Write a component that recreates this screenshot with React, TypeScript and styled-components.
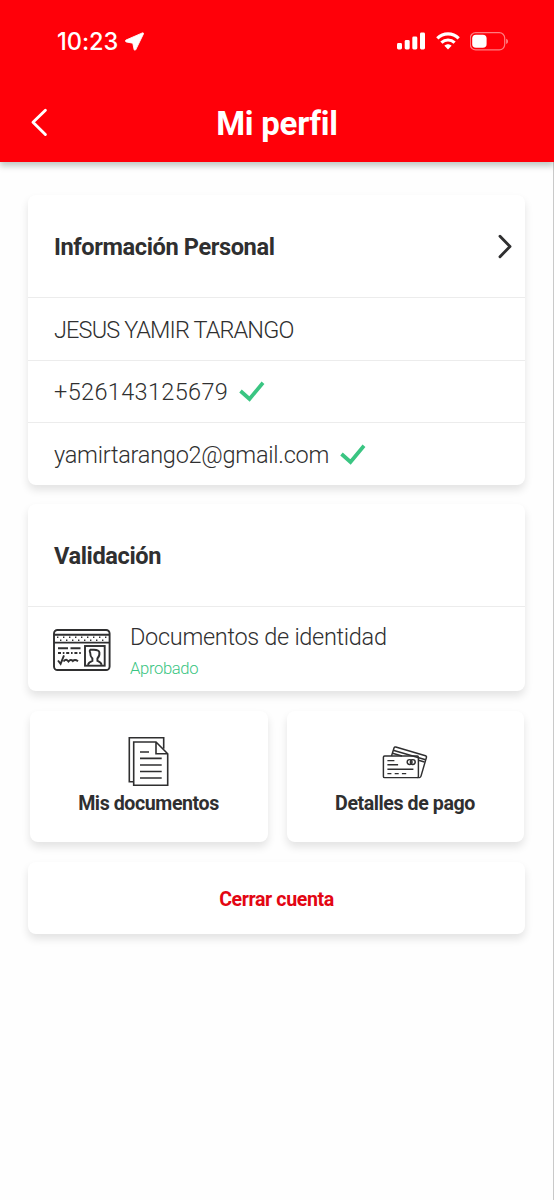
import React from 'react';
import styled, { createGlobalStyle } from 'styled-components';

const ink = '#2f2f30';
const green = '#3ac582';

const GlobalStyle = createGlobalStyle`
  * { box-sizing: border-box; }
  body { margin: 0; background: #fefefe; font-family: Roboto, "Noto Sans", sans-serif; color: ${ink}; }
  svg { display: block; flex: none; }
`;

const Screen = styled.div`
  width: 554px;
  height: 1200px;
  display: flex;
  flex-direction: column;
  overflow: hidden;
`;

const Header = styled.header`
  height: 162px;
  flex: none;
  background: #ff0009;
  color: #fff;
  box-shadow: 0 4px 6px rgba(10, 50, 30, 0.26);
  z-index: 1;
`;

const StatusBar = styled.div`
  height: 82px;
  padding: 0 44px 0 57px;
  display: flex;
  align-items: center;
`;

const Clock = styled.span`
  font: 500 23.6px/30px Inter, sans-serif;
  letter-spacing: -0.05px;
  width: 68px;
  margin-top: 2px;
  white-space: nowrap;
`;

const StatusIcons = styled.div`
  margin-left: auto;
  display: flex;
  align-items: center;
  gap: 10px;
`;

const TitleBar = styled.div`
  height: 80px;
  padding-left: 30px;
  display: grid;
  grid-template-columns: 20px 1fr 50px;
  align-items: center;
`;

const Title = styled.h1`
  margin: 4px 0 0;
  text-align: center;
  font-size: 33px;
  line-height: 44px;
  font-weight: 700;
  letter-spacing: -0.25px;
`;

const Content = styled.main`
  flex: 1;
  padding: 33px 28px 0 28px;
  border-right: 1px solid #c9c9c9;
  display: flex;
  flex-direction: column;
`;

const Card = styled.section<{ $gap: number }>`
  background: #fff;
  border-radius: 8px;
  box-shadow: 0 5px 9px rgba(0, 0, 0, 0.11);
  margin-bottom: ${(p) => p.$gap}px;
`;

const CardHeader = styled.div`
  height: 102px;
  padding: 2px 12px 0 26px;
  display: flex;
  align-items: center;
  justify-content: space-between;
`;

const Heading = styled.h2`
  margin: 0;
  font-size: 23.6px;
  line-height: 32px;
  font-weight: 700;
  letter-spacing: -0.4px;
`;

const Row = styled.div<{ $height: number }>`
  height: ${(p) => p.$height}px;
  border-top: 1px solid #ececec;
  padding: 1px 25px 0;
  display: flex;
  align-items: center;
`;

const Value = styled.span<{ $spacing: number }>`
  font-size: 23.5px;
  line-height: 32px;
  font-weight: 350;
  letter-spacing: ${(p) => p.$spacing}px;
  margin-left: 1px;
  white-space: nowrap;
`;

const CheckIcon = styled.svg`
  margin-left: 11px;
`;

const DocumentText = styled.div`
  margin: 2px 0 0 18px;
  display: flex;
  flex-direction: column;
`;

const Approved = styled.span`
  color: ${green};
  font-size: 16.6px;
  line-height: 24px;
  font-weight: 350;
  letter-spacing: -0.35px;
  margin: 4px 0 0 1px;
`;

const Tiles = styled.div`
  display: grid;
  grid-template-columns: 238px 237px;
  gap: 19px;
  padding-left: 2px;
  margin-bottom: 20px;
`;

const Tile = styled.button`
  height: 131px;
  padding: 25px 1px 0 0;
  border: 0;
  border-radius: 8px;
  background: #fff;
  box-shadow: 0 5px 9px rgba(0, 0, 0, 0.11);
  color: ${ink};
  font-family: inherit;
  display: flex;
  flex-direction: column;
  align-items: center;
`;

const TileLabel = styled.span`
  font-size: 19.6px;
  line-height: 26px;
  font-weight: 700;
  letter-spacing: -0.42px;
  margin-top: 4px;
`;

const CloseAccount = styled.button`
  height: 72px;
  border: 0;
  border-radius: 8px;
  background: #fff;
  box-shadow: 0 5px 9px rgba(0, 0, 0, 0.11);
  color: #e30613;
  font: 700 19.6px/26px Roboto, sans-serif;
  letter-spacing: -0.4px;
  padding: 4px 0 0;
`;

const Check = () => (
  <CheckIcon width="27" height="22" viewBox="0 0 27 22" fill="none" stroke={green} strokeWidth="3.7">
    <path d="M1.5 10 L10.5 18 L24 1.7" />
  </CheckIcon>
);

const IdIcon = () => (
  <svg width="58" height="42" viewBox="0 0 58 42" fill="none" stroke={ink} strokeWidth="1.9">
    <rect x="1" y="1" width="55.6" height="40" rx="3.5" />
    <path d="M1 5.8h55.6M1 13.6h55.6" />
    <path d="M4 8.3h50" strokeDasharray="1.4 4.6" strokeWidth="1.5" />
    <path d="M7 11.2h45" strokeDasharray="1.4 4.6" strokeWidth="1.5" />
    <path d="M5 19.2h10M17.5 19.2h10" />
    <path d="M5 24h23" strokeDasharray="3 1.8 1.6 1.8" />
    <path d="M5 31.5l2.6 3.3 3.4-8.4M10.5 32.5c2.5-3 3.5-1.5 5 0 1.5-2 3-2 4.3-.5 1.5-1.5 3-1.5 5.2.2" />
    <rect x="32" y="17" width="19.7" height="19.7" />
    <path d="M35 35.8c.4-2.4 1.8-3 4.4-4v-2.3c-1.7-1.7-2.3-3.6-2.2-5.8-.8-1.5-.6-2.7.5-3.1 3.5.6 8-1 8.7 2.9.3 2.8-.5 4.5-2 6v2.3c2.3 1 3.8 1.6 4.2 4" />
  </svg>
);

const DocumentsIcon = () => (
  <svg width="42" height="51" viewBox="0 0 42 51" fill="none" stroke={ink} strokeWidth="1.6">
    <path d="M5.5 45.7H1.3V1.8h34.4v11" />
    <path d="M5.7 6H28l11.7 11.8v31.4h-34zM28 6v11.8h11.7" />
    <path d="M12 16h9M12 22.4h21.7M12 29h21.7M12 35.5h21.7M12 42h21.7" />
  </svg>
);

const CardsIcon = () => (
  <svg width="46" height="51" viewBox="0 0 46 51" fill="none" stroke={ink} strokeWidth="1.45">
    <rect x="1.4" y="20" width="35" height="21.6" rx="1.2" />
    <path d="M9.5 20l2.6-8.2q.4-1.2 1.7-.8l29.7 8.8q1.3.4.9 1.7l-5.4 18.6q-.3 1.2-1.6 1.5h-2" />
    <path d="M11.1 14.2l32.5 9.6M10.5 17.3l9.5 2.7M36.5 24.2l6 1.8" />
    <path d="M5.4 24.6h7M5.4 28.8h10.7M5.4 33.2h26M5.4 37.6h4M12.7 37.6h4M19.9 37.6h4.3" />
    <circle cx="27.6" cy="26" r="2.4" />
    <circle cx="30.8" cy="26" r="2.4" />
  </svg>
);

export default function App() {
  return (
    <Screen>
      <GlobalStyle />
      <Header>
        <StatusBar>
          <Clock>10:23</Clock>
          <svg width="20" height="19" viewBox="0 0 20 19" fill="#fff" stroke="#fff" strokeWidth=".9" strokeLinejoin="round">
            <path d="M17.4.9.9 8.1c-.7.4-.6 1.6.3 1.8l6.6 1.3 1.3 6.3c.2.9 1.3 1 1.7.1L18.4 2C18.7 1.1 18.2.6 17.4.9Z" />
          </svg>
          <StatusIcons>
            <svg width="29" height="18" viewBox="0 0 29 18" fill="#fff">
              <rect x="0" y="11" width="5" height="6.5" rx="1.4" />
              <rect x="7.7" y="8" width="5" height="9.5" rx="1.4" />
              <rect x="15.3" y="4.5" width="5" height="13" rx="1.4" />
              <rect x="23" y=".5" width="5" height="17" rx="1.4" />
            </svg>
            <svg width="24" height="18" viewBox="0 0 24 18" fill="none" stroke="#fff" strokeWidth="3.2">
              <path d="M1.3 6.4C7.4.4 16.6.4 22.7 6.4M5.4 10.7c3.8-3.6 9.4-3.6 13.2 0" />
              <path d="M8.4 13.7c2.1-2 5.1-2 7.2 0L12 17.4Z" fill="#fff" stroke="none" />
            </svg>
            <svg width="40" height="19" viewBox="0 0 40 19">
              <rect x=".3" y=".7" width="34.4" height="17.2" rx="5.4" fill="none" stroke="#ff7c80" strokeWidth="1.2" />
              <rect x="2.2" y="2.8" width="14.4" height="13" rx="3.8" fill="#fff" />
              <path d="M36.2 6.7c2.3.8 2.3 4.4 0 5.2Z" fill="#ff8a8e" />
            </svg>
          </StatusIcons>
        </StatusBar>
        <TitleBar>
          <svg width="20" height="30" viewBox="0 0 20 30" fill="none" stroke="#fff" strokeWidth="2.9" strokeLinecap="round" strokeLinejoin="round">
            <path d="M15.4 3.2 3 15.3l12.4 12.2" />
          </svg>
          <Title>Mi perfil</Title>
        </TitleBar>
      </Header>
      <Content>
        <Card $gap={19}>
          <CardHeader>
            <Heading>Información Personal</Heading>
            <svg width="16" height="26" viewBox="0 0 16 26" fill="none" stroke={ink} strokeWidth="2.9" strokeLinecap="round" strokeLinejoin="round">
              <path d="M3 2.3 13 12.5 3 22.7" />
            </svg>
          </CardHeader>
          <Row $height={63}><Value $spacing={-0.87}>JESUS YAMIR TARANGO</Value></Row>
          <Row $height={62}><Value $spacing={0.35}>+526143125679</Value><Check /></Row>
          <Row $height={63}><Value $spacing={-0.25}>yamirtarango2@gmail.com</Value><Check /></Row>
        </Card>
        <Card $gap={20}>
          <CardHeader><Heading>Validación</Heading></CardHeader>
          <Row $height={85}>
            <IdIcon />
            <DocumentText>
              <Value $spacing={-0.3}>Documentos de identidad</Value>
              <Approved>Aprobado</Approved>
            </DocumentText>
          </Row>
        </Card>
        <Tiles>
          <Tile><DocumentsIcon /><TileLabel>Mis documentos</TileLabel></Tile>
          <Tile><CardsIcon /><TileLabel>Detalles de pago</TileLabel></Tile>
        </Tiles>
        <CloseAccount>Cerrar cuenta</CloseAccount>
      </Content>
    </Screen>
  );
}
